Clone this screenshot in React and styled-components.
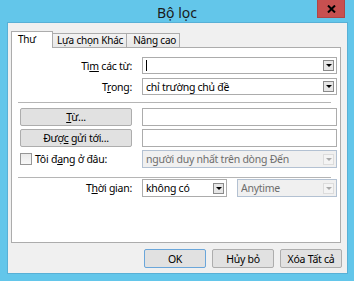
import React from 'react';
import styled, { createGlobalStyle } from 'styled-components';

const Global = createGlobalStyle`
  html, body { margin: 0; padding: 0; }
  body {
    width: 354px; height: 281px; overflow: hidden;
    background: #63c6ea;
    font-family: "Segoe UI", "Noto Sans", sans-serif;
    font-size: 10.5px; letter-spacing: -0.25px; color: #000;
  }
  u { text-decoration: underline; text-underline-offset: 1px; text-decoration-thickness: 1px; }
`;

const Window = styled.div`
  width: 354px; height: 281px; box-sizing: border-box;
  background: #63c6ea;
  display: flex; flex-direction: column;
`;

const TitleBar = styled.div`
  height: 23px; flex: none;
  display: grid; grid-template-columns: 1fr auto 1fr; align-items: start;
`;

const Title = styled.div`
  grid-column: 2;
  font-size: 14px; letter-spacing: 0; line-height: 14px; padding-top: 6px; color: #1a1a1a;
`;

const CloseButton = styled.div`
  grid-column: 3; justify-self: end; margin-right: 9px;
  width: 28px; height: 18px; box-sizing: border-box;
  background: #c75050; border: 1px solid #b04545; border-top: none;
  display: flex; align-items: center; justify-content: center;
`;

const Client = styled.div`
  flex: 1;
  margin: 0 7px 8px 8px;
  background: #f0f0f0;
  box-shadow: 0 0 0 1px #58b0d6;
  padding: 8px 5px 5px 3px;
  display: flex; flex-direction: column;
`;

const TabRow = styled.div`
  display: flex; align-items: flex-end; height: 17px;
  position: relative; z-index: 1; margin-bottom: -1px;
`;

const Tab = styled.div`
  box-sizing: border-box;
  min-width: ${p => p.$width}px;
  height: ${p => (p.$active ? 17 : 14)}px;
  margin-bottom: ${p => (p.$active ? 0 : 1)}px;
  margin-left: ${p => (p.$first ? 0 : -1)}px;
  padding: 0 ${p => p.$padR}px 0 ${p => p.$pad}px;
  border: 1px solid #acacac; border-bottom: none;
  background: ${p => (p.$active ? '#fff' : 'linear-gradient(#f3f3f3, #e8e8e8)')};
  position: relative; z-index: ${p => (p.$active ? 2 : 1)};
  line-height: ${p => (p.$active ? 15 : 13)}px;
  font-size: 10px; letter-spacing: -0.2px;
  white-space: nowrap;
`;

const Panel = styled.div`
  flex: 1;
  background: #fff;
  border: 1px solid #acacac;
  margin-right: 1px;
  padding: 9px 4px 0 8px;
  display: flex; flex-direction: column;
`;

const FieldGrid = styled.div`
  display: grid;
  grid-template-columns: 112px 195px;
  column-gap: 10px;
  row-gap: ${p => p.$gap}px;
  grid-auto-rows: ${p => p.$row}px;
`;

const Label = styled.div`
  justify-self: end; align-self: center; white-space: nowrap;
  line-height: 14px;
`;

const Divider = styled.div`
  height: 1px; background: #b5b5b5;
  margin: ${p => p.$top}px 5px ${p => p.$bottom}px -2px;
`;

const ComboBox = styled.div`
  width: ${p => (p.$width ? `${p.$width}px` : '100%')};
  height: ${p => p.$height || 17}px; box-sizing: border-box;
  border: 1px solid ${p => (p.$disabled ? '#b3c1d2' : '#acacac')};
  background: ${p => (p.$disabled ? '#f0f0f0' : '#fff')};
  color: ${p => (p.$disabled ? '#6d6d6d' : '#000')};
  display: flex; align-items: center;
  padding: 0 2px 0 3px;
  margin-left: ${p => p.$offset || 0}px;
`;

const ComboText = styled.span`
  flex: 1; white-space: nowrap; overflow: hidden; line-height: 14px;
  display: flex; align-items: center;
`;

const ArrowBox = styled.span`
  width: 11px; height: 11px; box-sizing: border-box; flex: none;
  border: 1px solid ${p => (p.$disabled ? '#dcdcdc' : '#8a8a8a')};
  background: ${p => (p.$disabled ? '#f4f4f4' : '#e6e6e6')};
  display: flex; align-items: center; justify-content: center;
`;

const Triangle = styled.span`
  width: 0; height: 0;
  border-left: 3px solid transparent;
  border-right: 3px solid transparent;
  border-top: 3px solid ${p => (p.$disabled ? '#a9a9a9' : '#000')};
`;

const TextBox = styled.div`
  height: ${p => p.$height || 17}px; box-sizing: border-box;
  border: 1px solid #acacac; background: #fff;
`;

const Caret = styled.span`
  width: 1px; height: 11px; background: #000;
`;

const PushButton = styled.div`
  box-sizing: border-box;
  width: ${p => (p.$width ? `${p.$width}px` : '100%')};
  height: ${p => p.$height}px;
  border: 1px solid ${p => (p.$default ? '#6aa6da' : '#adadad')};
  border-radius: 2px;
  background: #e1e1e1;
  display: flex; align-items: center; justify-content: center;
  white-space: nowrap; line-height: 14px;
`;

const CheckRow = styled.div`
  display: flex; align-items: center; gap: 3px; align-self: center;
`;

const CheckBox = styled.span`
  width: 12px; height: 12px; box-sizing: border-box;
  border: 1px solid #979797; background: linear-gradient(#eaeaea, #f8f8f8);
`;

const TimeFields = styled.div`
  display: flex; align-items: center;
`;

const ButtonRow = styled.div`
  display: flex; justify-content: flex-end; gap: 6px;
  margin-top: 6px;
`;

function Combo({ children, disabled, width, height, offset }) {
  return (
    <ComboBox $disabled={disabled} $width={width} $height={height} $offset={offset}>
      <ComboText>{children}</ComboText>
      <ArrowBox $disabled={disabled}><Triangle $disabled={disabled} /></ArrowBox>
    </ComboBox>
  );
}

export default function App() {
  return (
    <>
      <Global />
      <Window>
        <TitleBar>
          <Title>Bộ lọc</Title>
          <CloseButton>
            <svg width="9" height="8" viewBox="0 0 9 8">
              <path d="M1 0.5 L8 7.5 M8 0.5 L1 7.5" stroke="#000" strokeWidth="2" />
            </svg>
          </CloseButton>
        </TitleBar>
        <Client>
          <TabRow>
            <Tab $active $first $width={42} $pad={6} $padR={4}>Thư</Tab>
            <Tab $width={71} $pad={4} $padR={3}>Lựa chọn Khác</Tab>
            <Tab $width={50} $pad={6} $padR={3}>Nâng cao</Tab>
          </TabRow>
          <Panel>
            <FieldGrid $gap={4} $row={17}>
              <Label>Tì<u>m</u> các từ:</Label>
              <Combo><Caret /></Combo>
              <Label>T<u>r</u>ong:</Label>
              <Combo>chỉ trường chủ đề</Combo>
            </FieldGrid>
            <Divider $top={7} $bottom={5} />
            <FieldGrid $gap={3} $row={18}>
              <PushButton $height={18}><span><u>T</u>ừ...</span></PushButton>
              <TextBox $height={18} />
              <PushButton $height={18}><span>Đượ<u>c</u> gửi tới...</span></PushButton>
              <TextBox $height={18} />
              <CheckRow>
                <CheckBox />
                <span>Tôi đ<u>a</u>ng ở đâu:</span>
              </CheckRow>
              <Combo disabled height={18}>người duy nhất trên dòng Đến</Combo>
            </FieldGrid>
            <Divider $top={9} $bottom={1} />
            <FieldGrid $gap={0} $row={18}>
              <Label>T<u>h</u>ời gian:</Label>
              <TimeFields>
                <Combo width={85} height={18}>không có</Combo>
                <Combo disabled width={100} height={18} offset={10}>Anytime</Combo>
              </TimeFields>
            </FieldGrid>
          </Panel>
          <ButtonRow>
            <PushButton $default $width={62} $height={19}>OK</PushButton>
            <PushButton $width={62} $height={19}>Hủy bỏ</PushButton>
            <PushButton $width={62} $height={19}>Xóa Tất cả</PushButton>
          </ButtonRow>
        </Client>
      </Window>
    </>
  );
}
